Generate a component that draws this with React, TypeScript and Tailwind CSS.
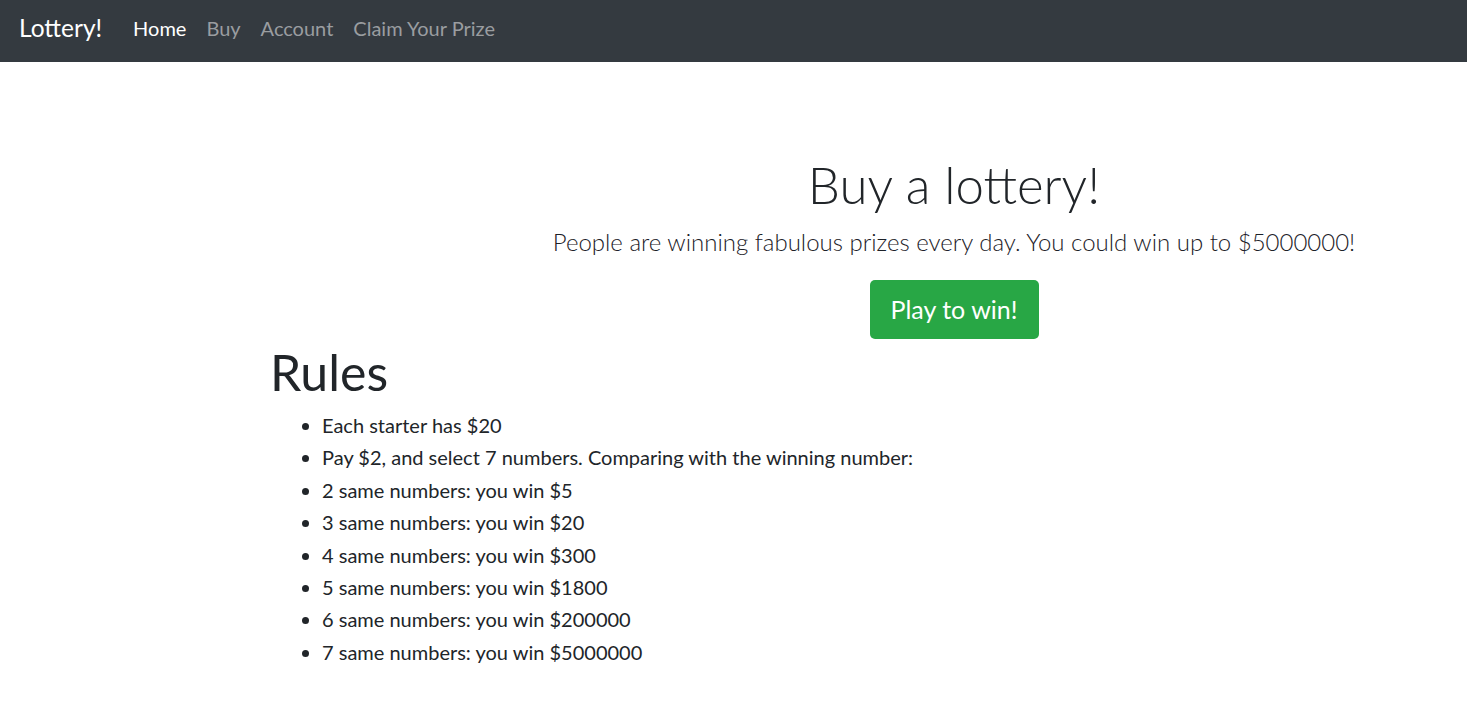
export default function App() {
  const rules = [
    'Each starter has $20',
    'Pay $2, and select 7 numbers. Comparing with the winning number:',
    '2 same numbers: you win $5',
    '3 same numbers: you win $20',
    '4 same numbers: you win $300',
    '5 same numbers: you win $1800',
    '6 same numbers: you win $200000',
    '7 same numbers: you win $5000000',
  ];

  return (
    <div className="min-h-screen bg-white text-[#212529] font-['Lato',sans-serif]">
      <nav className="h-[62px] bg-[#343a40] flex items-center px-[19px] pb-[6px]">
        <a className="text-white text-[24.5px] leading-none mr-[31px]">Lottery!</a>
        <div className="flex items-center gap-[20px] text-[20px]">
          <a className="text-white">Home</a>
          <a className="text-[#9a9da0]">Buy</a>
          <a className="text-[#9a9da0]">Account</a>
          <a className="text-[#9a9da0]">Claim Your Prize</a>
        </div>
      </nav>

      <main>
        {/* jumbotron */}
        <div className="pt-[90px] ml-[540px] w-[828px] flex flex-col items-center text-center">
          <h1 className="text-[51px] font-light leading-[66px]">Buy a lottery!</h1>
          <p className="mt-[7px] text-[24px] font-light leading-[34px] text-[#1c2128]">
            People are winning fabulous prizes every day. You could win up to $5000000!
          </p>
          <button className="mt-[21px] h-[59px] w-[169px] rounded-[5px] bg-[#28a745] text-white text-[25px]">
            Play to win!
          </button>
        </div>

        <div className="pl-[270px]">
          <h1 className="text-[50px] leading-[64px] mt-[1px]">Rules</h1>
          <ul className="list-disc pl-[52px] mt-[5px] text-[20px]">
            {rules.map((r) => (
              <li key={r} className="leading-[32.4px]">
                {r}
              </li>
            ))}
          </ul>
        </div>
      </main>
    </div>
  );
}
